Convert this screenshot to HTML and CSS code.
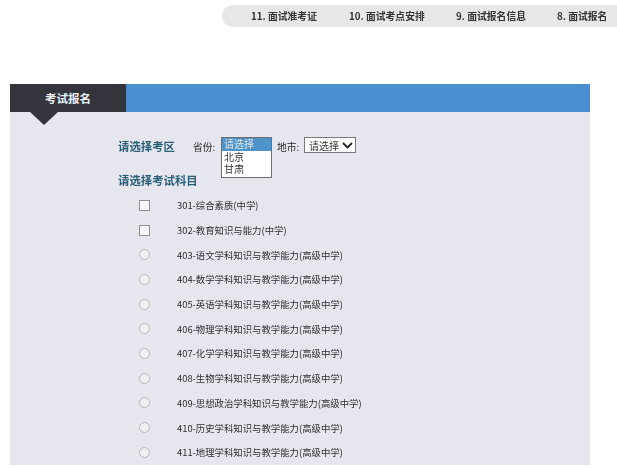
FILE: index.html
```html
<!DOCTYPE html>
<html lang="zh-CN">
<head>
<meta charset="utf-8">
<title>考试报名</title>
<link rel="stylesheet" href="styles.css">
</head>
<body>
<nav class="steps">
  <span class="step s11">11. 面试准考证</span>
  <span class="step s10">10. 面试考点安排</span>
  <span class="step s9">9. 面试报名信息</span>
  <span class="step s8">8. 面试报名</span>
</nav>
<main class="panel">
  <header class="panel-head">
    <h1 class="tab">考试报名</h1>
  </header>
  <section class="panel-body">
    <div class="region">
      <h2 class="heading region-title">请选择考区</h2>
      <span class="label province-label">省份:</span>
      <div class="listbox">
        <div class="opt opt-on">请选择</div>
        <div class="opt">北京</div>
        <div class="opt">甘肃</div>
      </div>
      <span class="label city-label">地市:</span>
      <div class="dropdown">
        <span>请选择</span>
        <svg class="chev" width="11" height="7" viewBox="0 0 11 7"><path d="M1 1l4.5 4.5L10 1" fill="none" stroke="#222" stroke-width="1.8"/></svg>
      </div>
    </div>
    <h2 class="heading subject-title">请选择考试科目</h2>
    <ul class="subjects">
      <li class="subject"><span class="check"></span><span class="name">301-综合素质(中学)</span></li>
      <li class="subject"><span class="check"></span><span class="name">302-教育知识与能力(中学)</span></li>
      <li class="subject"><span class="radio"></span><span class="name">403-语文学科知识与教学能力(高级中学)</span></li>
      <li class="subject"><span class="radio"></span><span class="name">404-数学学科知识与教学能力(高级中学)</span></li>
      <li class="subject"><span class="radio"></span><span class="name">405-英语学科知识与教学能力(高级中学)</span></li>
      <li class="subject"><span class="radio"></span><span class="name">406-物理学科知识与教学能力(高级中学)</span></li>
      <li class="subject"><span class="radio"></span><span class="name">407-化学学科知识与教学能力(高级中学)</span></li>
      <li class="subject"><span class="radio"></span><span class="name">408-生物学科知识与教学能力(高级中学)</span></li>
      <li class="subject"><span class="radio"></span><span class="name">409-思想政治学科知识与教学能力(高级中学)</span></li>
      <li class="subject"><span class="radio"></span><span class="name">410-历史学科知识与教学能力(高级中学)</span></li>
      <li class="subject"><span class="radio"></span><span class="name">411-地理学科知识与教学能力(高级中学)</span></li>
    </ul>
  </section>
</main>
</body>
</html>
```
FILE: styles.css
```css
* { box-sizing: border-box; }
html, body { margin: 0; padding: 0; }
body {
  width: 617px;
  height: 470px;
  overflow: hidden;
  background: #fff;
  color: #333;
  font-family: "Noto Sans CJK SC", "Liberation Sans", sans-serif;
  filter: blur(0.4px);
}
.steps {
  display: flex;
  align-items: center;
  height: 22px;
  margin: 5px 0 0 222px;
  background: #e7e7e7;
  border-radius: 11px 0 0 11px;
  font-size: 9.8px;
  font-weight: 700;
  color: #333;
  white-space: nowrap;
}
.s11 { margin-left: 29px; width: 98px; }
.s10 { width: 107px; }
.s9 { width: 101px; }
.panel { margin: 57px 27px 0 10px; }
.panel-head {
  height: 28px;
  background: #4a90d0;
}
.tab {
  position: relative;
  width: 116px;
  height: 28px;
  margin: 0;
  padding-left: 35px;
  background: #34343c;
  color: #f2f2f2;
  font-size: 11.5px;
  font-weight: 700;
  line-height: 28px;
}
.tab::after {
  content: "";
  position: absolute;
  left: 20px;
  top: 28px;
  border-style: solid;
  border-width: 13px 14px 0;
  border-color: #34343c transparent transparent;
}
.panel-body {
  height: 353px;
  padding: 25px 0 0 108px;
  background: #e6e6ee;
}
.heading {
  margin: 0;
  color: #28607a;
  font-size: 11.4px;
  font-weight: 700;
  line-height: 18px;
}
.region {
  display: flex;
  align-items: flex-start;
  height: 34px;
}
.region-title { width: 75px; }
.label { font-size: 9.8px; line-height: 20px; color: #2c2c2c; }
.province-label { width: 28px; }
.city-label { width: 27px; margin-left: 5px; }
.listbox {
  width: 51px;
  height: 41px;
  background: #fff;
  border: 1px solid #6d6d74;
  font-size: 10px;
  line-height: 12.6px;
}
.opt { padding-left: 2px; color: #333; }
.opt-on { background: #4f94c8; color: #dfeaf2; }
.dropdown {
  display: flex;
  align-items: center;
  justify-content: space-between;
  width: 52px;
  height: 16px;
  padding: 0 2px 0 4px;
  background: #fff;
  border: 1px solid #77777c;
  font-size: 10px;
  color: #333;
}
.subjects {
  list-style: none;
  margin: 4px 0 0;
  padding: 0;
}
.subject {
  display: flex;
  align-items: center;
  height: 24.7px;
}
.check, .radio {
  flex: none;
  width: 11px;
  height: 11px;
  margin-left: 21px;
  margin-right: 27px;
  background: #f7f7f9;
  border: 1px solid #8f8f95;
}
.radio { border-radius: 50%; border: 1.5px solid #b4b4b9; background: #f0f0f3; }
.name {
  font-size: 9.4px;
  color: #2f2f2f;
  white-space: nowrap;
}
```
